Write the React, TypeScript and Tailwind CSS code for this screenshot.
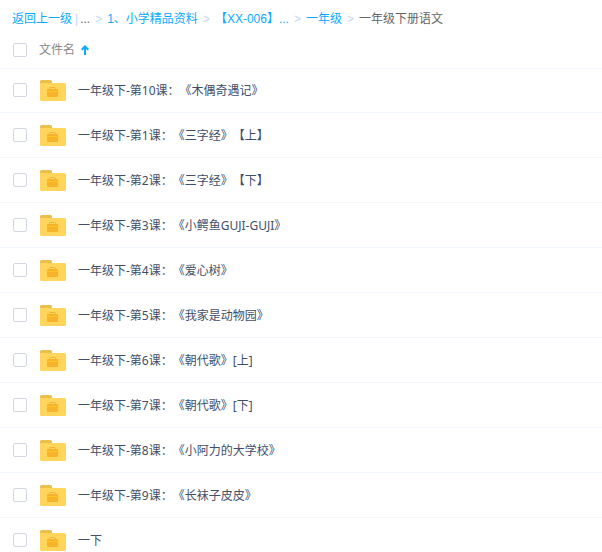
import React, { useState } from 'react';

type Crumb = {
  label: string;
  href?: string;
};

const crumbs: Crumb[] = [
  { label: '1、小学精品资料', href: '#materials' },
  { label: '【XX-006】...', href: '#xx-006' },
  { label: '一年级', href: '#grade-1' },
  { label: '一年级下册语文' },
];

const folders = [
  '一年级下-第10课：《木偶奇遇记》',
  '一年级下-第1课：《三字经》【上】',
  '一年级下-第2课：《三字经》【下】',
  '一年级下-第3课：《小鳄鱼GUJI-GUJI》',
  '一年级下-第4课：《爱心树》',
  '一年级下-第5课：《我家是动物园》',
  '一年级下-第6课：《朝代歌》[上]',
  '一年级下-第7课：《朝代歌》[下]',
  '一年级下-第8课：《小阿力的大学校》',
  '一年级下-第9课：《长袜子皮皮》',
  '一下',
];

const FolderIcon: React.FC = () => (
  <svg width="26" height="22" viewBox="0 0 26 22" className="shrink-0" aria-hidden="true">
    <path d="M0 1.5A1.5 1.5 0 0 1 1.5 0H10.5A1.5 1.5 0 0 1 12 1.5V5H0Z" fill="#ecbf4c" />
    <path d="M0 3H24.5A1.5 1.5 0 0 1 26 4.5V19.5A1.5 1.5 0 0 1 24.5 21H1.5A1.5 1.5 0 0 1 0 19.5Z" fill="#ffd55c" />
    <path d="M9.5 9.5V8.5A1 1 0 0 1 10.5 7.5H14.5A1 1 0 0 1 15.5 8.5V9.5" fill="none" stroke="#f0b032" />
    <path d="M7 10A1 1 0 0 1 8 9H17A1 1 0 0 1 18 10V11H7Z" fill="#f5b22d" />
    <path d="M7 11H19V12H7Z" fill="#fdc526" />
    <path d="M7 12H18V16A1 1 0 0 1 17 17H8A1 1 0 0 1 7 16Z" fill="#f7b32b" />
  </svg>
);

type CheckBoxProps = {
  label: string;
  checked: boolean;
  onChange: () => void;
};

const CheckBox: React.FC<CheckBoxProps> = ({ label, checked, onChange }) => (
  <input
    type="checkbox"
    aria-label={label}
    checked={checked}
    onChange={onChange}
    className="size-3.5 shrink-0 appearance-none rounded-xs border border-[#d2d7e3] bg-white checked:border-[#09aaff] checked:bg-[#09aaff]"
  />
);

const App: React.FC = () => {
  const [selected, setSelected] = useState<string[]>([]);
  const allSelected = selected.length === folders.length;

  const toggle = (name: string) =>
    setSelected((current) =>
      current.includes(name) ? current.filter((item) => item !== name) : [...current, name],
    );

  return (
    <main
      lang="zh-CN"
      className="h-screen overflow-hidden bg-white font-['Noto_Sans','Noto_Sans_CJK_SC',sans-serif] text-xs whitespace-nowrap [text-spacing-trim:space-all]"
    >
      <nav
        aria-label="路径"
        className="flex h-8 items-center gap-[5px] px-3 pt-1.5 font-['Liberation_Sans','Noto_Sans_CJK_SC',sans-serif] text-[#09aaff]"
      >
        <a href="#up">返回上一级</a>
        <span className="-mx-0.5 text-[#c4d8f4]">|</span>
        <span className="-ml-px text-[#666666]">...</span>
        {crumbs.map((crumb) => (
          <React.Fragment key={crumb.label}>
            <span className="text-[#c4d8f4]">&gt;</span>
            {crumb.href ? (
              <a href={crumb.href}>{crumb.label}</a>
            ) : (
              <span className="text-[#666666]">{crumb.label}</span>
            )}
          </React.Fragment>
        ))}
      </nav>

      <div className="flex h-[37px] items-center gap-3 border-b border-[#f2f6fd] px-[13px]">
        <CheckBox
          label="全选"
          checked={allSelected}
          onChange={() => setSelected(allSelected ? [] : folders)}
        />
        <button type="button" className="flex items-center gap-1.5 text-[#888888]">
          文件名
          <svg width="8" height="10" viewBox="0 0 8 10" fill="none" stroke="#09aaff" strokeWidth="2" aria-hidden="true">
            <path d="M4 10V1.5M0.7 4.8L4 1.5L7.3 4.8" />
          </svg>
        </button>
      </div>

      <ul className="-mt-px">
        {folders.map((name) => (
          <li key={name} className="flex h-[45px] items-center border-b border-[#f2f6fd] px-[13px]">
            <CheckBox label={name} checked={selected.includes(name)} onChange={() => toggle(name)} />
            <a href="#folder" className="ml-[13px] flex items-center gap-3 pt-0.5 text-[#424e67]">
              <FolderIcon />
              {name}
            </a>
          </li>
        ))}
      </ul>
    </main>
  );
};

export default App;
